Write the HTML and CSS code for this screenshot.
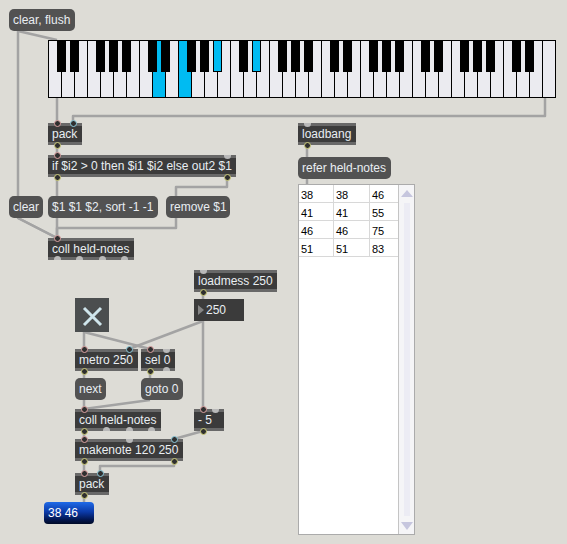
FILE: index.html
```html
<!DOCTYPE html>
<html lang="en">
<head>
    <meta charset="UTF-8">
    <title>kslider held notes</title>
    <link rel="stylesheet" href="styles.css">
</head>
<body>
<div class="patcher">

    <!-- patch cords, under every box -->
    <svg class="cords" width="567" height="544">
        <polyline points="18,31 57,40"/>
        <polyline points="18,31 18,218 57,238"/>
        <polyline points="18,218 57,238"/>
        <polyline points="57,98 57,123"/>
        <polyline points="545,98 545,116 73,116 73,123"/>
        <polyline points="57,144 57,155"/>
        <polyline points="57,177 57,196"/>
        <polyline points="57,218 57,238"/>
        <polyline points="227,177 227,187 176,187 176,196"/>
        <polyline points="176,218 176,228 57,228 57,238"/>
        <polyline points="307,144 307,157"/>
        <polyline points="307,179 307,184"/>
        <polyline points="203,292 203,299"/>
        <polyline points="203,321 203,409"/>
        <polyline points="203,321 129,349"/>
        <polyline points="84,332 84,349"/>
        <polyline points="84,332 150,349"/>
        <polyline points="84,371 84,378"/>
        <polyline points="84,400 84,409"/>
        <polyline points="150,371 150,378"/>
        <polyline points="150,400 84,409"/>
        <polyline points="84,431 84,439"/>
        <polyline points="203,431 174,439"/>
        <polyline points="84,461 84,473"/>
        <polyline points="174,461 174,466 100,466 100,473"/>
        <polyline points="84,495 84,502"/>
    </svg>

    <div class="msg m-clearflush">clear, flush</div>

    <svg class="kslider" width="508" height="58">
        <defs>
            <pattern id="octave" width="91" height="58" patternUnits="userSpaceOnUse">
                <path d="M0.5 0V58M13.5 0V58M26.5 0V58M39.5 0V58M52.5 0V58M65.5 0V58M78.5 0V58" stroke="#000" stroke-width="1"/>
                <rect x="9" y="0" width="9" height="32" fill="#000"/>
                <rect x="22" y="0" width="9" height="32" fill="#000"/>
                <rect x="48" y="0" width="9" height="32" fill="#000"/>
                <rect x="61" y="0" width="9" height="32" fill="#000"/>
                <rect x="74" y="0" width="9" height="32" fill="#000"/>
            </pattern>
        </defs>
        <rect x="0" y="0" width="508" height="58" fill="#ebebf0"/>
        <rect class="held" x="105" y="0" width="12" height="58"/>
        <rect class="held" x="131" y="0" width="12" height="58"/>
        <rect x="0" y="0" width="503" height="58" fill="url(#octave)"/>
        <rect class="held" x="165.5" y="0.5" width="8" height="31" stroke="#000"/>
        <rect class="held" x="204.5" y="0.5" width="8" height="31" stroke="#000"/>
        <rect x="0.5" y="0.5" width="507" height="57" fill="none" stroke="#000"/>
    </svg>

    <div class="obj o-pack1">pack
        <div class="ports in"><i class="p hot"></i><i class="p cold"></i></div>
        <div class="ports out"><i class="p sig"></i></div>
    </div>

    <div class="obj o-if">if $i2 &gt; 0 then $i1 $i2 else out2 $1
        <div class="ports in"><i class="p hot"></i><i class="p free"></i></div>
        <div class="ports out"><i class="p sig"></i><i class="p sig"></i></div>
    </div>

    <div class="msg m-clear">clear</div>
    <div class="msg m-sort">$1 $1 $2, sort -1 -1</div>
    <div class="msg m-remove">remove $1</div>

    <div class="obj o-coll1">coll held-notes
        <div class="ports in"><i class="p hot"></i></div>
        <div class="ports out"><i class="p free"></i><i class="p free"></i><i class="p free"></i><i class="p free"></i></div>
    </div>

    <div class="obj o-loadbang">loadbang
        <div class="ports in"><i class="p free"></i></div>
        <div class="ports out"><i class="p sig"></i></div>
    </div>

    <div class="msg m-refer">refer held-notes</div>

    <div class="cellblock">
        <div class="cells">
            <span>38</span><span>38</span><span>46</span>
            <span>41</span><span>41</span><span>55</span>
            <span>46</span><span>46</span><span>75</span>
            <span>51</span><span>51</span><span>83</span>
        </div>
        <div class="scroll">
            <svg class="arrow up" width="12" height="7"><path d="M6 0L12 7H0Z"/></svg>
            <div class="track"></div>
            <svg class="arrow down" width="12" height="8"><path d="M0 0H12L6 8Z"/></svg>
        </div>
    </div>

    <div class="obj o-loadmess">loadmess 250
        <div class="ports in"><i class="p free"></i></div>
        <div class="ports out"><i class="p sig"></i></div>
    </div>

    <div class="numbox"><svg class="tri" width="6" height="10"><path d="M0 0L6 5L0 10Z"/></svg>250</div>

    <div class="toggle">
        <svg width="34" height="34"><path d="M9 10L26 27M26 10L9 27"/></svg>
    </div>

    <div class="obj o-metro">metro 250
        <div class="ports in"><i class="p hot"></i><i class="p cold"></i></div>
        <div class="ports out"><i class="p sig"></i></div>
    </div>

    <div class="obj o-sel">sel 0
        <div class="ports in"><i class="p hot"></i><i class="p free"></i></div>
        <div class="ports out"><i class="p sig"></i><i class="p free"></i></div>
    </div>

    <div class="msg m-next">next</div>
    <div class="msg m-goto">goto 0</div>

    <div class="obj o-coll2">coll held-notes
        <div class="ports in"><i class="p hot"></i></div>
        <div class="ports out"><i class="p sig"></i><i class="p free"></i><i class="p free"></i><i class="p free"></i></div>
    </div>

    <div class="obj o-minus">- 5
        <div class="ports in"><i class="p hot"></i><i class="p free"></i></div>
        <div class="ports out"><i class="p sig"></i></div>
    </div>

    <div class="obj o-makenote">makenote 120 250
        <div class="ports in"><i class="p hot"></i><i class="p free"></i><i class="p cold"></i></div>
        <div class="ports out"><i class="p sig"></i><i class="p sig"></i></div>
    </div>

    <div class="obj o-pack2">pack
        <div class="ports in"><i class="p hot"></i><i class="p cold"></i></div>
        <div class="ports out"><i class="p sig"></i></div>
    </div>

    <div class="display">38 46</div>

</div>
</body>
</html>
```

FILE: styles.css
```css
body {
    margin: 0;
    background: #dddcd6;
    font-family: "Liberation Sans", Arial, sans-serif;
}
.patcher {
    position: relative;
    width: 567px;
    height: 544px;
    overflow: hidden;
}
.cords {
    position: absolute;
    left: 0;
    top: 0;
}
.cords polyline {
    fill: none;
    stroke: #a3a3a3;
    stroke-width: 2.5;
    stroke-linejoin: round;
}

/* boxes */
.obj, .msg {
    position: absolute;
    height: 22px;
    box-sizing: border-box;
    padding: 0 4px;
    font-size: 12px;
    line-height: 22px;
    color: #e9eef2;
    white-space: nowrap;
}
.obj {
    background: linear-gradient(#686868 0 3px, #3b3b3b 3px calc(100% - 3px), #686868 calc(100% - 3px));
}
.msg {
    background: #525252;
    border-radius: 5px;
}

/* inlets and outlets */
.ports {
    position: absolute;
    left: 0;
    right: 0;
    display: flex;
    justify-content: space-between;
    padding: 0 5.5px;
}
.ports.in {
    top: -3.5px;
    align-items: flex-start;
}
.ports.out {
    bottom: -3.5px;
    align-items: flex-end;
}
.p {
    display: block;
    width: 7px;
    height: 7px;
    box-sizing: border-box;
    border-radius: 50%;
    border: 1.5px solid;
    background: #2f2f2f;
}
.p.hot { border-color: #dea3a3; }
.p.cold { border-color: #8ccbdc; }
.p.sig { border-color: #cfcf7a; }
.p.free {
    height: 4px;
    border: none;
    background: #b9b9b9;
    border-radius: 0 0 4px 4px;
    margin-top: 3.5px;
}
.ports.out .p.free {
    border-radius: 4px 4px 0 0;
    margin-top: 0;
    margin-bottom: 3.5px;
}

/* canvas places */
.m-clearflush { left: 9px; top: 9px; width: 66px; }
.kslider { position: absolute; left: 48px; top: 40px; }
.kslider .held { fill: #00bbf2; }
.o-pack1 { left: 48px; top: 123px; width: 34px; }
.o-if { left: 48px; top: 155px; width: 188px; }
.m-clear { left: 9px; top: 196px; width: 34px; }
.m-sort { left: 48px; top: 196px; width: 110px; }
.m-remove { left: 166px; top: 196px; width: 64px; }
.o-coll1 { left: 48px; top: 238px; width: 86px; }
.o-loadbang { left: 298px; top: 123px; width: 58px; }
.m-refer { left: 298px; top: 157px; width: 93px; }
.o-loadmess { left: 194px; top: 270px; width: 83px; }
.o-metro { left: 75px; top: 349px; width: 63px; }
.o-sel { left: 141px; top: 349px; width: 34px; }
.m-next { left: 75px; top: 378px; width: 31px; }
.m-goto { left: 141px; top: 378px; width: 42px; }
.o-coll2 { left: 75px; top: 409px; width: 86px; }
.o-minus { left: 194px; top: 409px; width: 30px; }
.o-makenote { left: 75px; top: 439px; width: 108px; }
.o-pack2 { left: 75px; top: 473px; width: 34px; }

.numbox {
    position: absolute;
    left: 194px;
    top: 299px;
    width: 50px;
    height: 22px;
    box-sizing: border-box;
    padding-left: 12px;
    background: #3b3b3b;
    color: #e9eef2;
    font-size: 12px;
    line-height: 22px;
}
.numbox .tri {
    position: absolute;
    left: 4px;
    top: 6px;
    fill: #858585;
}
.toggle {
    position: absolute;
    left: 75px;
    top: 298px;
    width: 34px;
    height: 34px;
    background: #4b4e4f;
}
.toggle svg {
    display: block;
    stroke: #cfe5ec;
    stroke-width: 3;
}
.display {
    position: absolute;
    left: 44px;
    top: 502px;
    width: 50px;
    height: 22px;
    box-sizing: border-box;
    padding-left: 4px;
    border-radius: 4px;
    background: linear-gradient(#1f6ae8, #0b3aa8 45%, #021650 80%, #000a26);
    color: #fff;
    font-size: 12px;
    line-height: 22px;
}

/* coll viewer */
.cellblock {
    position: absolute;
    left: 298px;
    top: 184px;
    width: 117px;
    height: 351px;
    box-sizing: border-box;
    border: 1px solid #ababab;
    background: #fff;
    display: flex;
}
.cells {
    width: 99px;
    display: grid;
    grid-template-columns: 35px 36px 28px;
    grid-auto-rows: 18px;
    align-content: start;
    border-right: 1px solid #c4c4c4;
}
.cells span {
    border-right: 1px solid #d8d8d8;
    border-bottom: 1px solid #d8d8d8;
    padding: 2px 0 0 2px;
    font-size: 11px;
    line-height: 16px;
    color: #000;
}
.cells span:nth-child(3n) {
    border-right: none;
}
.scroll {
    flex: 1;
    background: #f5f5f7;
    display: flex;
    flex-direction: column;
    align-items: center;
    padding: 5px 0 4px;
}
.scroll .arrow {
    fill: #c6c6de;
}
.scroll .track {
    flex: 1;
    width: 6px;
    margin: 6px 0;
    background: #ececf4;
}
```
